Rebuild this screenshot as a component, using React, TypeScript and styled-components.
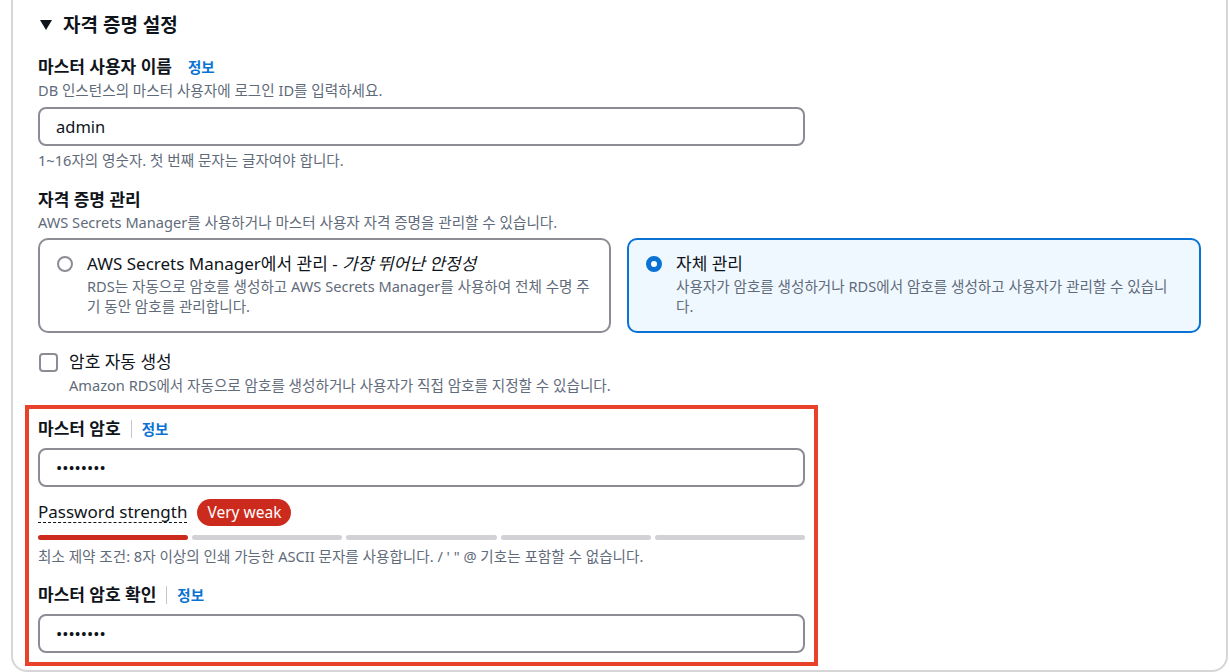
import React from "react";
import styled, { createGlobalStyle } from "styled-components";

const Global = createGlobalStyle`
  html, body { margin: 0; padding: 0; background: #ffffff; }
  body {
    font-family: "Noto Sans", "Noto Sans CJK KR", sans-serif;
    color: #0f141a;
    -webkit-font-smoothing: antialiased;
  }
  * { box-sizing: border-box; }
`;

const Panel = styled.div`
  margin-left: 11px;
  width: 1217px;
  height: 672px;
  border: 2px solid #d6d6d6;
  border-top: none;
  border-radius: 0 0 16px 16px;
  padding: 12px 25px 14px 25px;
  display: flex;
  flex-direction: column;
  overflow: hidden;
`;

const Heading = styled.div`
  display: flex;
  align-items: center;
  gap: 11px;
  height: 26px;
  padding-left: 2px;
  font-size: 19px;
  line-height: 26px;
  font-weight: 700;
`;

const Label = styled.div<{ $mt: number }>`
  margin-top: ${(p) => p.$mt}px;
  display: flex;
  align-items: center;
  font-size: 17px;
  line-height: 22px;
  font-weight: 700;
`;

const InfoLink = styled.span<{ $sep?: boolean }>`
  font-size: 14.5px;
  font-weight: 700;
  color: #0972d3;
  margin-left: ${(p) => (p.$sep ? 10 : 16)}px;
  padding-left: ${(p) => (p.$sep ? 10 : 0)}px;
  border-left: ${(p) => (p.$sep ? "1px solid #c6c6cd" : "none")};
  line-height: 18px;
`;

const Desc = styled.div<{ $mt: number; $indent?: number }>`
  margin-top: ${(p) => p.$mt}px;
  margin-left: ${(p) => p.$indent ?? 0}px;
  font-size: 14.6px;
  line-height: 20px;
  color: #5f6b7a;
`;

const Input = styled.input<{ $mt: number }>`
  margin-top: ${(p) => p.$mt}px;
  width: 767px;
  height: 39px;
  border: 2px solid #8c8c94;
  border-radius: 8px;
  padding: 0 16px;
  font-family: "Noto Sans", "Noto Sans CJK KR", sans-serif;
  font-size: 16.5px;
  color: #0f141a;
  background: #fff;
  outline: none;
`;

const Cards = styled.div`
  margin-top: 6px;
  display: grid;
  grid-template-columns: 573px 574px;
  gap: 16px;
`;

const Card = styled.div<{ $selected?: boolean }>`
  height: 95px;
  border: 2px solid ${(p) => (p.$selected ? "#0972d3" : "#8c8c94")};
  background: ${(p) => (p.$selected ? "#f0f8ff" : "#ffffff")};
  border-radius: 10px;
  padding: 12px 16px 0 17px;
  display: flex;
  gap: 14px;
  align-items: flex-start;
`;

const Radio = styled.span<{ $checked?: boolean }>`
  flex: none;
  width: 16px;
  height: 16px;
  margin-top: 4px;
  border-radius: 50%;
  border: ${(p) => (p.$checked ? "5px solid #0972d3" : "2px solid #8c8c94")};
  background: #fff;
`;

const CardBody = styled.div`
  flex: 1;
  min-width: 0;
`;

const CardTitle = styled.div`
  font-size: 17px;
  line-height: 24px;
  color: #0f141a;
  em { font-style: italic; }
`;

const CardDesc = styled.div`
  font-size: 14.6px;
  line-height: 20px;
  color: #5f6b7a;
`;

const CheckRow = styled.div`
  margin-top: 18px;
  display: flex;
  align-items: center;
  gap: 11px;
  padding-left: 1px;
`;

const Checkbox = styled.span`
  width: 19px;
  height: 19px;
  border: 2px solid #8c8c94;
  border-radius: 4px;
  background: #fff;
`;

const CheckText = styled.span`
  font-size: 17px;
  line-height: 22px;
`;

const Highlight = styled.div`
  margin-top: 23px;
  width: 767px;
  outline: 4px solid #e8432a;
  outline-offset: 9px;
  display: flex;
  flex-direction: column;
`;

const StrengthRow = styled.div`
  margin-top: 12px;
  display: flex;
  align-items: center;
  gap: 10px;
  height: 26px;
`;

const StrengthLabel = styled.span`
  font-size: 17px;
  line-height: 21px;
  border-bottom: 1px dashed #0f141a;
`;

const Badge = styled.span`
  height: 27px;
  padding: 0 10px;
  border-radius: 14px;
  background: #cc2a1d;
  color: #fff;
  font-size: 15.5px;
  line-height: 27px;
`;

const Bars = styled.div`
  margin-top: 10px;
  display: grid;
  grid-template-columns: repeat(5, 1fr);
  gap: 4px;
`;

const Bar = styled.span<{ $on?: boolean }>`
  height: 5px;
  border-radius: 3px;
  background: ${(p) => (p.$on ? "#cc2a1d" : "#d1d1d6")};
`;

export default function App() {
  return (
    <>
      <Global />
      <Panel>
        <Heading>
          <svg width="12" height="10" viewBox="0 0 12 10">
            <polygon points="0,0 12,0 6,10" fill="#0f141a" />
          </svg>
          <span>자격 증명 설정</span>
        </Heading>

        <Label $mt={18}>
          마스터 사용자 이름<InfoLink>정보</InfoLink>
        </Label>
        <Desc $mt={2}>DB 인스턴스의 마스터 사용자에 로그인 ID를 입력하세요.</Desc>
        <Input $mt={7} value="admin" readOnly />
        <Desc $mt={4}>1~16자의 영숫자. 첫 번째 문자는 글자여야 합니다.</Desc>

        <Label $mt={19}>자격 증명 관리</Label>
        <Desc $mt={1}>AWS Secrets Manager를 사용하거나 마스터 사용자 자격 증명을 관리할 수 있습니다.</Desc>
        <Cards>
          <Card>
            <Radio />
            <CardBody>
              <CardTitle>
                AWS Secrets Manager에서 관리 - <em>가장 뛰어난 안정성</em>
              </CardTitle>
              <CardDesc>
                RDS는 자동으로 암호를 생성하고 AWS Secrets Manager를 사용하여 전체 수명 주기 동안 암호를 관리합니다.
              </CardDesc>
            </CardBody>
          </Card>
          <Card $selected>
            <Radio $checked />
            <CardBody>
              <CardTitle>자체 관리</CardTitle>
              <CardDesc>
                사용자가 암호를 생성하거나 RDS에서 암호를 생성하고 사용자가 관리할 수 있습니다.
              </CardDesc>
            </CardBody>
          </Card>
        </Cards>

        <CheckRow>
          <Checkbox />
          <CheckText>암호 자동 생성</CheckText>
        </CheckRow>
        <Desc $mt={2} $indent={31}>
          Amazon RDS에서 자동으로 암호를 생성하거나 사용자가 직접 암호를 지정할 수 있습니다.
        </Desc>

        <Highlight>
          <Label $mt={0}>
            마스터 암호<InfoLink $sep>정보</InfoLink>
          </Label>
          <Input $mt={8} type="password" value="password" readOnly />
          <StrengthRow>
            <StrengthLabel>Password strength</StrengthLabel>
            <Badge>Very weak</Badge>
          </StrengthRow>
          <Bars>
            <Bar $on />
            <Bar />
            <Bar />
            <Bar />
            <Bar />
          </Bars>
          <Desc $mt={6}>
            최소 제약 조건: 8자 이상의 인쇄 가능한 ASCII 문자를 사용합니다. / ' " @ 기호는 포함할 수 없습니다.
          </Desc>
          <Label $mt={18}>
            마스터 암호 확인<InfoLink $sep>정보</InfoLink>
          </Label>
          <Input $mt={8} type="password" value="password" readOnly />
        </Highlight>
      </Panel>
    </>
  );
}
